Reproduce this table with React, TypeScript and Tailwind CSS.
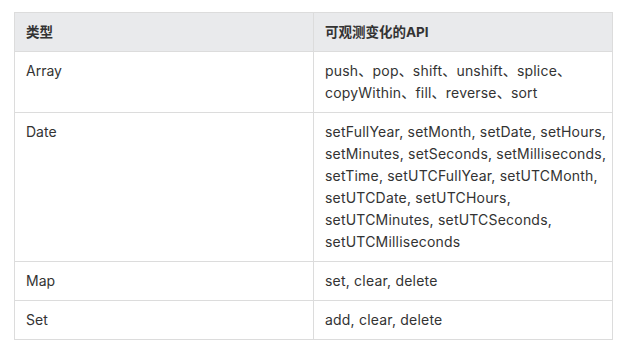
const rows: { type: string; apis: string[] }[] = [
  { type: "Array", apis: ["push、pop、shift、unshift、splice、", "copyWithin、fill、reverse、sort"] },
  {
    type: "Date",
    apis: [
      "setFullYear, setMonth, setDate, setHours,",
      "setMinutes, setSeconds, setMilliseconds,",
      "setTime, setUTCFullYear, setUTCMonth,",
      "setUTCDate, setUTCHours,",
      "setUTCMinutes, setUTCSeconds,",
      "setUTCMilliseconds",
    ],
  },
  { type: "Map", apis: ["set, clear, delete"] },
  { type: "Set", apis: ["add, clear, delete"] },
];

export default function App() {
  return (
    <div
      className="min-h-screen bg-white pt-[12px] pl-[14px] text-[14px] leading-[22px] text-[#333]"
      style={{ fontFamily: 'Inter, "Noto Sans CJK SC", sans-serif' }}
    >
      <table className="w-[599px] table-fixed border-collapse border border-[#dcdcdc]">
        <thead>
          <tr className="bg-[#e9eaec] text-[13.5px]">
            <th className="w-[299px] border border-[#dcdcdc] px-[11px] py-[8px] text-left font-bold">类型</th>
            <th className="border border-[#dcdcdc] px-[11px] py-[8px] text-left font-bold">可观测变化的API</th>
          </tr>
        </thead>
        <tbody>
          {rows.map((r) => (
            <tr key={r.type}>
              <td className="border border-[#dcdcdc] px-[11px] py-[8px] align-top">{r.type}</td>
              <td className="border border-[#dcdcdc] px-[11px] py-[8px] align-top tracking-[0.2px]">
                {r.apis.map((line) => (
                  <div key={line} className="whitespace-nowrap">{line}</div>
                ))}
              </td>
            </tr>
          ))}
        </tbody>
      </table>
    </div>
  );
}
